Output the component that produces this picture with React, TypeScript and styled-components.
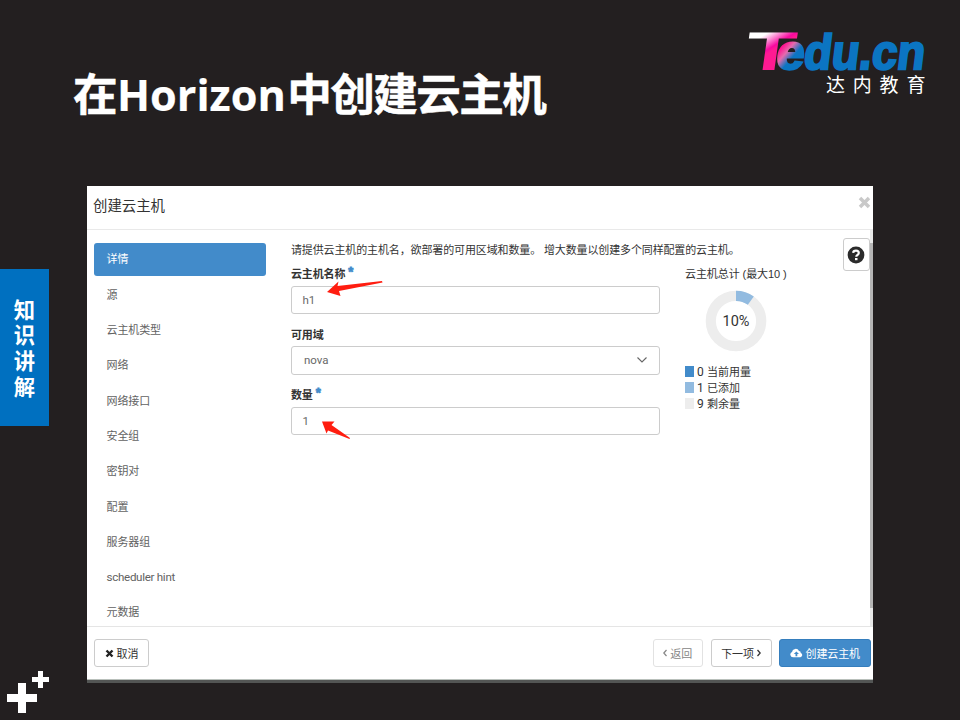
import React from "react";
import styled, { createGlobalStyle, css } from "styled-components";

const GlobalStyle = createGlobalStyle`
  * { box-sizing: border-box; }
  html, body { margin: 0; padding: 0; background: #231f20; }
  button { font: inherit; }
`;

const Slide = styled.div`
  width: 960px;
  height: 720px;
  overflow: hidden;
  display: grid;
  grid-template-rows: 186px 534px;
  background: #231f20;
  font-family: "Liberation Sans", "Noto Sans CJK SC", sans-serif;
`;

const SlideHeader = styled.header`
  display: flex;
  justify-content: space-between;
  padding: 25px 30px 0 73px;
`;

const Title = styled.h1`
  margin: 34px 0 0;
  height: 66px;
  color: #fff;
  font: 700 44.6px/66px "Noto Sans CJK SC", sans-serif;
  letter-spacing: -1.6px;
  -webkit-text-stroke: 0.5px #fff;
  white-space: nowrap;
`;

const TitleLatin = styled.span`
  margin: 0 1.6px 0 1px;
  font-family: "Open Sans", sans-serif;
  font-size: 43.2px;
  letter-spacing: 0;
  -webkit-text-stroke: 0.2px #fff;
`;

const SlideBody = styled.div`
  display: grid;
  grid-template-columns: 87px 786px;
`;

const SideRail = styled.aside`
  display: flex;
  flex-direction: column;
  justify-content: space-between;
  padding: 83px 0 5px;
`;

const ChapterTab = styled.div`
  width: 49px;
  height: 157px;
  padding: 5px 1px 0 0;
  display: flex;
  align-items: center;
  justify-content: center;
  background: #0070c0;
  color: #fff;
  font: 700 21.3px/32px "Noto Sans CJK SC", sans-serif;
  letter-spacing: 4.3px;
  writing-mode: vertical-rl;
`;

const Modal = styled.section`
  height: 497px;
  display: grid;
  grid-template-rows: 44px 396px 54px;
  background: #fff;
  border-bottom: 3px solid #535554;
  color: #333;
  font-size: 11px;
`;

const ModalHeader = styled.div`
  display: flex;
  justify-content: space-between;
  align-items: flex-start;
  padding: 10px 2px 0 6px;
  border-bottom: 1px solid #e9e9e9;
`;

const ModalTitle = styled.h2`
  margin: 0;
  font-size: 14.4px;
  font-weight: 400;
  line-height: 21px;
`;

const CloseIcon = styled.svg`
  display: block;
  width: 13px;
  height: 13px;
`;

const ModalBody = styled.div`
  display: grid;
  grid-template-columns: 197px 1fr 27px 3px;
  padding-left: 7px;
`;

const Nav = styled.nav`
  display: flex;
  flex-direction: column;
  gap: 2px;
  padding-top: 12.5px;
  width: 172px;
  height: 396px;
  overflow: hidden;
`;

const NavItem = styled.a<{ $active?: boolean }>`
  flex: none;
  height: 33.3px;
  padding-left: 12.5px;
  line-height: ${(p) => (p.$active ? 33 : 34)}px;
  letter-spacing: -0.1px;
  border-radius: 3px;
  color: ${(p) => (p.$active ? "#fff" : "#626262")};
  background: ${(p) => (p.$active ? "#428bca" : "transparent")};
`;

const Latin = styled.span`
  display: inline-block;
  font: 11.6px/34px Roboto, sans-serif;
  letter-spacing: -0.3px;
`;

const Content = styled.div`
  display: grid;
  grid-template-columns: 368.5px 1fr;
  grid-template-rows: 28px 1fr;
  column-gap: 25.5px;
  padding-top: 8px;
`;

const Intro = styled.p`
  grid-column: 1 / -1;
  margin: 0;
  line-height: 24px;
  letter-spacing: -0.13px;
  white-space: nowrap;
`;

const Form = styled.form`
  display: flex;
  flex-direction: column;
`;

const Field = styled.div`
  height: 60.6px;
`;

const Label = styled.label`
  display: flex;
  gap: 3px;
  height: 19.7px;
  font-weight: 700;
  line-height: 17px;
  letter-spacing: -0.15px;
`;

const Required = styled.span`
  margin-top: -2px;
  color: #428bca;
  -webkit-text-stroke: 0.8px #428bca;
  font: 700 13px/16px "Liberation Sans", sans-serif;
`;

const control = css`
  height: 28.3px;
  border: 1px solid #ccc;
  border-radius: 3px;
  color: #686868;
  font: 11.5px/26.5px Roboto, sans-serif;
`;

const Input = styled.div`
  ${control}
  padding-left: 10.5px;
`;

const Select = styled.div`
  ${control}
  display: flex;
  align-items: center;
  justify-content: space-between;
  padding: 0 10.5px 0 12px;
`;

const Quota = styled.div`
  display: flex;
  flex-direction: column;
  padding-right: 10px;
`;

const QuotaTitle = styled.div`
  line-height: 17px;
  letter-spacing: -0.08px;
  white-space: nowrap;
`;

const Donut = styled.svg`
  display: block;
  width: 62px;
  height: 62px;
  margin: 7px 0 0 20px;
`;

const Legend = styled.ul`
  margin: 12px 0 0;
  padding: 0;
  list-style: none;
`;

const LegendItem = styled.li`
  display: flex;
  align-items: center;
  height: 15.9px;
  line-height: 16px;
  white-space: nowrap;
`;

const Swatch = styled.i<{ $color: string }>`
  width: 8.5px;
  height: 11px;
  margin-right: 3.5px;
  background: ${(p) => p.$color};
`;

const Count = styled.span`
  width: 10px;
  font-family: Roboto, sans-serif;
  font-size: 12px;
`;

const HelpButton = styled.button`
  width: 27px;
  height: 33px;
  margin-top: 8px;
  padding: 0 1px 0 0;
  display: grid;
  place-items: center;
  border: 1px solid #ccc;
  border-radius: 3px;
  background: #fff;
`;

const ScrollTrack = styled.div`
  padding-top: 13px;
  background: #e8e8e8;
`;

const ScrollThumb = styled.div`
  height: 365px;
  background: #b5b5b5;
`;

const ModalFooter = styled.div`
  display: flex;
  align-items: flex-start;
  padding: 12px 2.5px 0 7px;
  border-top: 1px solid #e5e5e5;
  border-bottom: 1px solid #b9c0bb;
`;

const Button = styled.button<{ $width: number; $tone?: "muted" | "primary" }>`
  width: ${(p) => p.$width}px;
  height: 28px;
  padding: 0;
  display: flex;
  align-items: center;
  justify-content: center;
  gap: 3px;
  border: 1px solid
    ${(p) => (p.$tone === "primary" ? "#357ebd" : p.$tone === "muted" ? "#e2e2e2" : "#ccc")};
  border-radius: 3px;
  background: ${(p) => (p.$tone === "primary" ? "#428bca" : "#fff")};
  color: ${(p) => (p.$tone === "primary" ? "#fff" : p.$tone === "muted" ? "#858585" : "#333")};
  font-size: 11px;
  letter-spacing: -0.1px;
  white-space: nowrap;
`;

const ButtonGroup = styled.div`
  display: flex;
  gap: 7.5px;
  margin-left: auto;
`;

const ArrowLayer = styled.svg`
  position: absolute;
  left: 320px;
  top: 276px;
  pointer-events: none;
`;

function Logo() {
  return (
    <svg width="186" height="76" viewBox="744 25 186 76">
      <defs>
        <linearGradient id="tFill" gradientUnits="userSpaceOnUse" x1="6" y1="-36" x2="20" y2="-22">
          <stop offset="0.2" stopColor="#fff" />
          <stop offset="0.85" stopColor="#f808a0" />
          <stop offset="1" stopColor="#ff1a92" />
        </linearGradient>
        <linearGradient id="eFill" gradientUnits="userSpaceOnUse" x1="3" y1="-20" x2="22" y2="-6">
          <stop offset="0" stopColor="#ff1490" />
          <stop offset="0.3" stopColor="#e66bad" />
          <stop offset="0.65" stopColor="#0b75c2" />
        </linearGradient>
      </defs>
      <g fontFamily="Liberation Sans" fontWeight="700">
        <text transform="translate(743.5 70) skewX(-8) scale(1.5 1)" fontSize="54.5" fill="url(#tFill)">T</text>
        <g stroke="#0b75c2" strokeWidth="2.4" fill="#0b75c2" fontSize="49">
          <text transform="translate(775 69) skewX(-7)" fill="url(#eFill)" stroke="url(#eFill)" textLength="28" lengthAdjust="spacingAndGlyphs">e</text>
          <text transform="translate(802.5 69) skewX(-7)" textLength="121" lengthAdjust="spacingAndGlyphs">du.cn</text>
        </g>
      </g>
      <text x="826" y="92" fontFamily="Noto Sans CJK SC" fontSize="19" letterSpacing="7.8" fill="#fff">达内教育</text>
    </svg>
  );
}

function Crosses() {
  return (
    <svg width="49" height="45" viewBox="0 670 49 45" fill="#fff">
      <path d="M18 683h8v11h11v8H26v11h-8v-11H7v-8h11z" />
      <path d="M38 671h5v6h6v5h-6v6h-5v-6h-6v-5h6z" />
    </svg>
  );
}

const navItems = ["详情", "源", "云主机类型", "网络", "网络接口", "安全组", "密钥对", "配置", "服务器组", "scheduler hint", "元数据"];

const quota = [
  { color: "#428bca", count: 0, label: "当前用量" },
  { color: "#92bbe0", count: 1, label: "已添加" },
  { color: "#ededed", count: 9, label: "剩余量" },
];

export default function App() {
  return (
    <Slide>
      <GlobalStyle />
      <SlideHeader>
        <Title>在<TitleLatin>Horizon</TitleLatin>中创建云主机</Title>
        <Logo />
      </SlideHeader>
      <SlideBody>
        <SideRail>
          <ChapterTab>知识讲解</ChapterTab>
          <Crosses />
        </SideRail>
        <Modal>
          <ModalHeader>
            <ModalTitle>创建云主机</ModalTitle>
            <CloseIcon viewBox="0 0 13 13">
              <path d="M2 2l9 9M11 2l-9 9" stroke="#c9c9c9" strokeWidth="3.5" />
            </CloseIcon>
          </ModalHeader>
          <ModalBody>
            <Nav>
              {navItems.map((item, i) => (
                <NavItem key={item} $active={i === 0}>
                  {item.startsWith("s") ? <Latin>{item}</Latin> : item}
                </NavItem>
              ))}
            </Nav>
            <Content>
              <Intro>请提供云主机的主机名，欲部署的可用区域和数量。 增大数量以创建多个同样配置的云主机。</Intro>
              <Form>
                <Field>
                  <Label>云主机名称<Required>*</Required></Label>
                  <Input>h1</Input>
                </Field>
                <Field>
                  <Label>可用域</Label>
                  <Select>
                    nova
                    <svg width="12" height="8" viewBox="0 0 12 8">
                      <path d="M1.5 1.5L6 6l4.5-4.5" fill="none" stroke="#666" strokeWidth="1.1" />
                    </svg>
                  </Select>
                </Field>
                <Field>
                  <Label>数量<Required>*</Required></Label>
                  <Input>1</Input>
                </Field>
              </Form>
              <Quota>
                <QuotaTitle>云主机总计 (最大10 )</QuotaTitle>
                <Donut viewBox="-31 -31 62 62">
                  <circle r="25.2" fill="none" stroke="#ededed" strokeWidth="10.2" />
                  <path d="M0-25.2A25.2 25.2 0 0 1 14.81-20.39" fill="none" stroke="#92bbe0" strokeWidth="10.2" />
                  <text y="5" textAnchor="middle" fontFamily="Roboto" fontSize="14.5" fill="#333">10%</text>
                </Donut>
                <Legend>
                  {quota.map((q) => (
                    <LegendItem key={q.label}>
                      <Swatch $color={q.color} />
                      <Count>{q.count}</Count>
                      {q.label}
                    </LegendItem>
                  ))}
                </Legend>
              </Quota>
            </Content>
            <HelpButton aria-label="帮助">
              <svg width="18" height="18" viewBox="0 0 18 18">
                <circle cx="9" cy="9" r="8.4" fill="#2b2b2b" />
                <path d="M6.2 6.9C6.3 3.9 11.8 3.9 11.8 7c0 1.9-2.5 1.7-2.5 3.7" fill="none" stroke="#fff" strokeWidth="2.2" />
                <path d="M8 12h2.5v2.2H8z" fill="#fff" />
              </svg>
            </HelpButton>
            <ScrollTrack><ScrollThumb /></ScrollTrack>
          </ModalBody>
          <ModalFooter>
            <Button $width={55}>
              <svg width="9" height="9" viewBox="0 0 9 9">
                <path d="M1.5 1.5l6 6M7.5 1.5l-6 6" stroke="#222" strokeWidth="2.4" />
              </svg>
              取消
            </Button>
            <ButtonGroup>
              <Button $width={50.5} $tone="muted">
                <svg width="4" height="8" viewBox="0 0 4 8">
                  <path d="M3.5 1L.8 4l2.7 3" fill="none" stroke="#858585" strokeWidth="1.2" />
                </svg>
                返回
              </Button>
              <Button $width={61}>
                下一项
                <svg width="4" height="8" viewBox="0 0 4 8">
                  <path d="M.5 1l2.7 3L.5 7" fill="none" stroke="#333" strokeWidth="1.3" />
                </svg>
              </Button>
              <Button $width={91.5} $tone="primary">
                <svg width="13" height="10" viewBox="0 0 13 10">
                  <path d="M3 9.3A2.7 2.7 0 0 1 2 4.1 3.7 3.7 0 0 1 9 2.9a2 2 0 0 1 1.8 2A2.3 2.3 0 0 1 10.3 9.3z" fill="#fff" />
                  <path d="M6.4 3.4L9 6H7.3v2.2H5.5V6H3.8z" fill="#428bca" />
                </svg>
                创建云主机
              </Button>
            </ButtonGroup>
          </ModalFooter>
        </Modal>
      </SlideBody>
      <ArrowLayer width="70" height="170" viewBox="320 276 70 170" fill="#ff1d10">
        <path d="M327 292L338.5 281.5 337.5 286 382 281 382.5 282.5 339 291 340.5 296z" />
        <path d="M322 421.5L334.5 421.5 331.5 425 350 438 349.5 439 328 430.5 326.5 433.5z" />
      </ArrowLayer>
    </Slide>
  );
}
